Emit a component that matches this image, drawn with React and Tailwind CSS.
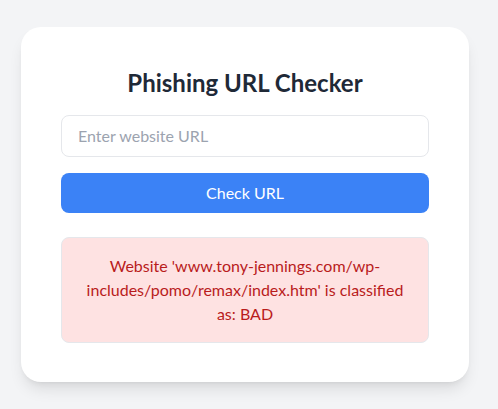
export default function App() {
  return (
    <div
      className="min-h-screen bg-[#f3f4f6] pt-[27px] pl-[21px]"
      style={{ fontFamily: '"Segoe UI", Lato, "Noto Sans", sans-serif' }}
    >
      <div className="w-[448px] h-[355px] bg-white rounded-[20px] shadow-lg p-10">
        <h1 className="text-2xl font-bold text-[#1f2937] text-center mb-4">
          Phishing URL Checker
        </h1>
        <input
          type="text"
          placeholder="Enter website URL"
          className="w-full px-4 py-2 border border-[#e5e7eb] rounded-lg text-base mb-4 outline-none placeholder:text-[#9ca3af]"
        />
        <button className="w-full py-2 bg-[#3b82f6] text-white rounded-lg text-base">
          Check URL
        </button>
        <div className="mt-6 p-4 bg-[#fee2e2] border border-[#e5e7eb] rounded-lg text-[#b91c1c] text-center text-base">
          Website 'www.tony-jennings.com/wp-includes/pomo/remax/index.htm' is classified as: BAD
        </div>
      </div>
    </div>
  )
}
